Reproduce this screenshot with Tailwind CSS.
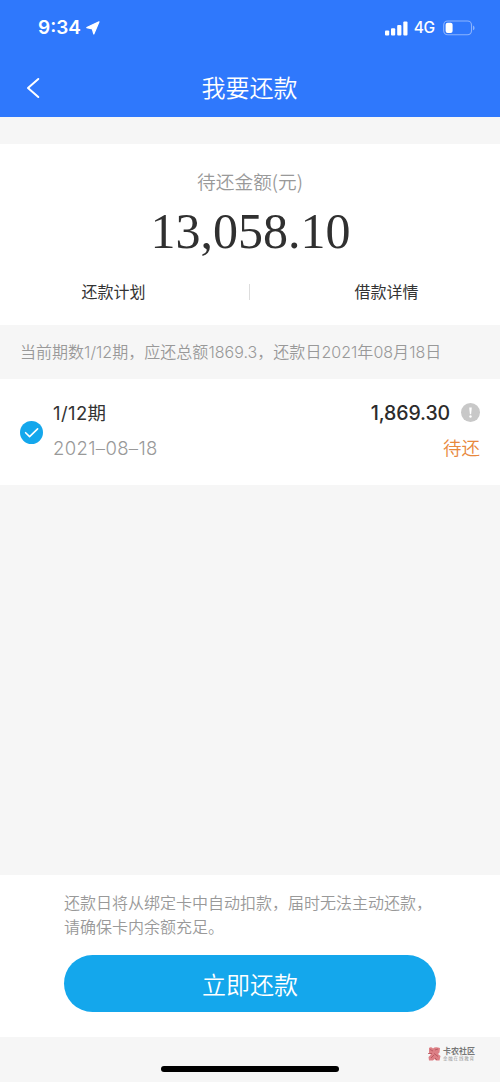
<!DOCTYPE html>
<html lang="zh-CN">
<head>
<meta charset="utf-8">
<meta name="viewport" content="width=device-width, initial-scale=1">
<title>我要还款</title>
<script src="https://cdn.jsdelivr.net/npm/@tailwindcss/browser@4"></script>
</head>
<body class="bg-[#f6f6f6]">
<div class="w-[500px] h-[1082px] flex flex-col overflow-hidden whitespace-nowrap font-['Inter','Noto_Sans_CJK_SC',sans-serif] text-[#333]">
  <header class="h-[117px] shrink-0 bg-[#2f78fc] text-white flex flex-col">
    <div class="h-[56px] flex items-center justify-between pl-[38px] pr-[25px]">
      <div class="flex items-center gap-[5px]">
        <span class="text-[19px] leading-6 font-semibold">9:34</span>
        <svg class="w-[14px] h-[14px]" viewBox="0 0 14 14" fill="#fff" stroke="#fff" stroke-width="1.200" stroke-linejoin="round"><path d="M13 .8 7.800 13 6.300 7.800.8 6.600Z"/></svg>
      </div>
      <div class="flex items-center">
        <svg class="w-[23px] h-[15px]" viewBox="0 0 23 15" fill="#fff"><rect x="0" y="9.500" width="4.200" height="5" rx="1"/><rect x="6" y="7.200" width="4.200" height="7.300" rx="1"/><rect x="12.200" y="4" width="4.200" height="10.500" rx="1"/><rect x="18.300" y="0.500" width="4.200" height="14" rx="1"/></svg>
        <span class="text-[15.500px] leading-5 font-medium ml-[6px] tracking-[-0.2px]">4G</span>
        <svg class="w-[32px] h-[16px] ml-[8px]" viewBox="0 0 32 16" fill="none"><rect x=".7" y="1" width="27.800" height="13.800" rx="4" stroke="#8bb3fd" stroke-width="1.100"/><rect x="2.600" y="2.800" width="7" height="10.300" rx="2" fill="#fff"/><path d="M30 5.500q1.600.6 1.600 2.400T30 10.300Z" fill="#8bb3fd"/></svg>
      </div>
    </div>
    <div class="h-[61px] grid grid-cols-[60px_1fr_60px] items-center">
      <svg class="w-[14px] h-[22px] ml-[26px] mt-[2px]" viewBox="0 0 14 22" fill="none" stroke="#fff" stroke-width="2" stroke-linecap="round" stroke-linejoin="round"><path d="M12.300 2 2 11 12.300 20"/></svg>
      <h1 class="mt-[5px] text-[24px] leading-8 font-[350] text-center -ml-px">我要还款</h1>
    </div>
  </header>

  <section class="mt-[27px] h-[181px] shrink-0 bg-white flex flex-col items-center">
    <p class="mt-[23px] text-[18.700px] leading-7 font-[350] text-[#999] font-['Noto_Sans_CJK_SC',sans-serif]">待还金额(元)</p>
    <p class="mt-[8px] pl-px text-[50px] leading-[56px] text-[#303030] font-['Liberation_Serif',serif]">13,058.10</p>
    <div class="mt-[21px] w-full grid grid-cols-[227px_46px_227px] items-center text-center text-[16px] leading-6">
      <span>还款计划</span>
      <span class="w-px h-[16px] bg-[#ddd] ml-[22px]"></span>
      <span>借款详情</span>
    </div>
  </section>

  <p class="h-[54px] shrink-0 pl-5 pb-px flex items-center text-[16px] font-[350] tracking-[0.03px] text-[#999]">当前期数1/12期，应还总额1869.3，还款日2021年08月18日</p>

  <section class="h-[106px] shrink-0 bg-white flex items-center px-5">
    <svg class="w-[23px] h-[23px]" viewBox="0 0 23 23"><circle cx="11.500" cy="11.500" r="11.500" fill="#14a7ec"/><path d="m5.600 11.700 4 3.900 8-7.700" fill="none" stroke="#fff" stroke-width="1.600" stroke-linecap="round" stroke-linejoin="round"/></svg>
    <div class="ml-[10px] mb-[4px] flex-1 flex flex-col gap-[7px]">
      <span class="text-[18.500px] leading-7 tracking-[0.400px]">1/12期</span>
      <span class="text-[18.500px] leading-7 font-[350] tracking-[0.350px] text-[#999]">2021–08–18</span>
    </div>
    <div class="mb-[4px] flex flex-col items-end gap-[7px]">
      <div class="flex items-center gap-[11px] h-7">
        <span class="text-[19.500px] leading-7 font-[480] tracking-[-0.100px] text-[#2b2b2b]">1,869.30</span>
        <svg class="w-[19px] h-[19px]" viewBox="0 0 19 19"><circle cx="9.500" cy="9.500" r="9.500" fill="#c8c8c8"/><path d="M8.200 4.500h2.600l-.7 6.800H8.900Z" fill="#fff"/><circle cx="9.500" cy="13.500" r="1.200" fill="#fff"/></svg>
      </div>
      <span class="text-[18.500px] leading-7 font-[350] text-[#e8883c]">待还</span>
    </div>
  </section>

  <section class="mt-[390px] h-[162px] shrink-0 bg-white px-16 pt-4">
    <p class="text-[16px] leading-6 font-[350] text-[#999]">还款日将从绑定卡中自动扣款，届时无法主动还款，<br>请确保卡内余额充足。</p>
    <button class="mt-4 w-[372px] h-[57px] pt-[4px] rounded-full bg-[#14a7ec] text-white text-[24px] leading-8 font-[350] flex items-center justify-center">立即还款</button>
  </section>

  <footer class="flex-1 flex flex-col">
    <div class="ml-[427px] mt-[9px] flex gap-[2px] h-[17px]">
      <svg class="w-[14px] h-[16px]" viewBox="0 0 14 16" fill="none"><path d="M2 2q2-1.500 4 .5Q8 .5 13 2l-.5 4.500L11 8l2.500 2-1 4.500H9L7.500 13 6 14.500H2L1.500 11 4 8.500 2 7.500Z" fill="#dc7f85"/><path d="M3 3.500 6 5m2-1 3-1M1 7.500h4m2 0 4 3M4 12l3-3m3 5-2-2" stroke="#b2505a" stroke-width=".8"/></svg>
      <div class="flex flex-col">
        <span class="text-[8px] leading-[10px] font-bold text-[#777]">卡农社区</span>
        <span class="h-[6px] text-[4.500px] leading-[6px] tracking-[0.800px] text-[#999]">金融在线教育</span>
      </div>
    </div>
    <div class="mt-[3px] ml-[161px] w-[178px] h-[6px] rounded-full bg-black"></div>
  </footer>
</div>
</body>
</html>
